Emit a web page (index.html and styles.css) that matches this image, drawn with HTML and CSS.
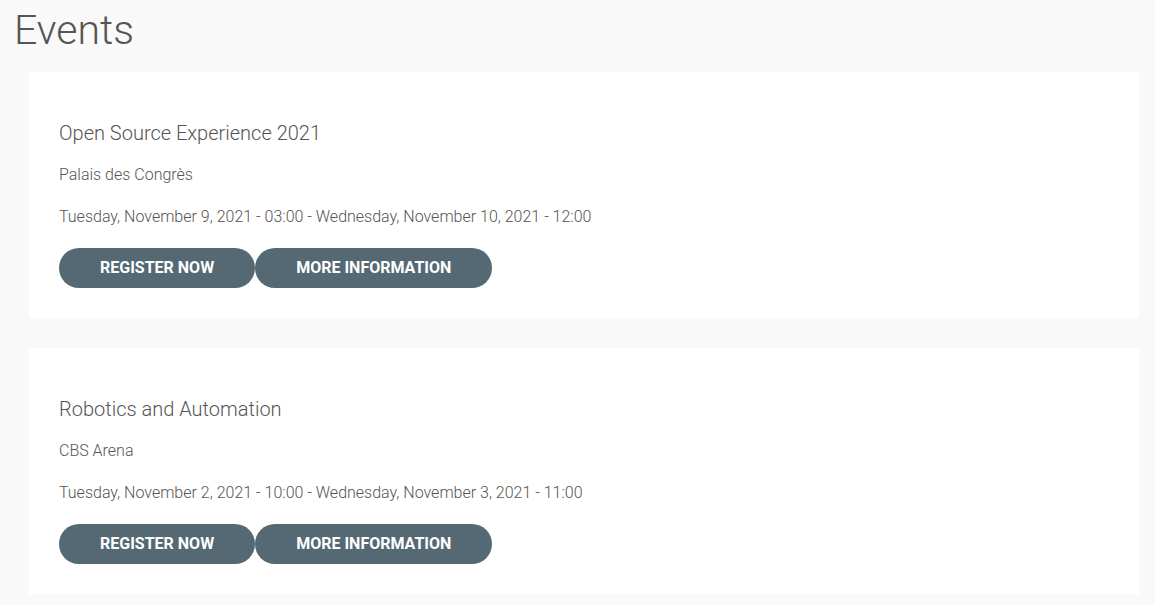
FILE: index.html
```html
<!DOCTYPE html>
<html>
<head>
<meta charset="utf-8">
<link rel="stylesheet" href="styles.css">
</head>
<body>
<h1 class="page-title">Events</h1>
<div class="events">
  <div class="card">
    <h3 class="card-title">Open Source Experience 2021</h3>
    <p class="card-line card-venue">Palais des Congrès</p>
    <p class="card-line card-date">Tuesday, November 9, 2021 - 03:00 - Wednesday, November 10, 2021 - 12:00</p>
    <div class="actions">
      <a class="btn" href="#">Register now</a>
      <a class="btn" href="#">More information</a>
    </div>
  </div>
  <div class="card">
    <h3 class="card-title">Robotics and Automation</h3>
    <p class="card-line card-venue">CBS Arena</p>
    <p class="card-line card-date">Tuesday, November 2, 2021 - 10:00 - Wednesday, November 3, 2021 - 11:00</p>
    <div class="actions">
      <a class="btn" href="#">Register now</a>
      <a class="btn" href="#">More information</a>
    </div>
  </div>
</div>
</body>
</html>
```
FILE: styles.css
```css
html, body {
  margin: 0;
  padding: 0;
}
body {
  background: #f9f9f9;
  font-family: Roboto, "Liberation Sans", sans-serif;
  color: #555;
}
.page-title {
  margin: 0;
  padding: 6px 0 0 14px;
  font-size: 41px;
  font-weight: 300;
  line-height: 48px;
  color: #555;
}
.events {
  display: flex;
  flex-direction: column;
  gap: 30px;
  padding: 18px 16px 0 29px;
}
.card {
  background: #fff;
  padding: 30px;
}
.card-title {
  margin: 19px 0 0 0;
  font-size: 20px;
  font-weight: 300;
  line-height: 24px;
  color: #555;
}
.card-line {
  margin: 0;
  font-size: 16px;
  font-weight: 300;
  line-height: 24px;
  color: #555;
}
.card-venue {
  margin-top: 18px;
}
.card-date {
  margin-top: 18px;
}
.actions {
  display: flex;
  margin-top: 19px;
}
.btn {
  display: inline-flex;
  align-items: center;
  box-sizing: border-box;
  height: 40px;
  padding: 0 41px 2px;
  border-radius: 20px;
  background: #546973;
  color: #fff;
  font-size: 16px;
  font-weight: 700;
  text-transform: uppercase;
  text-decoration: none;
}
```
